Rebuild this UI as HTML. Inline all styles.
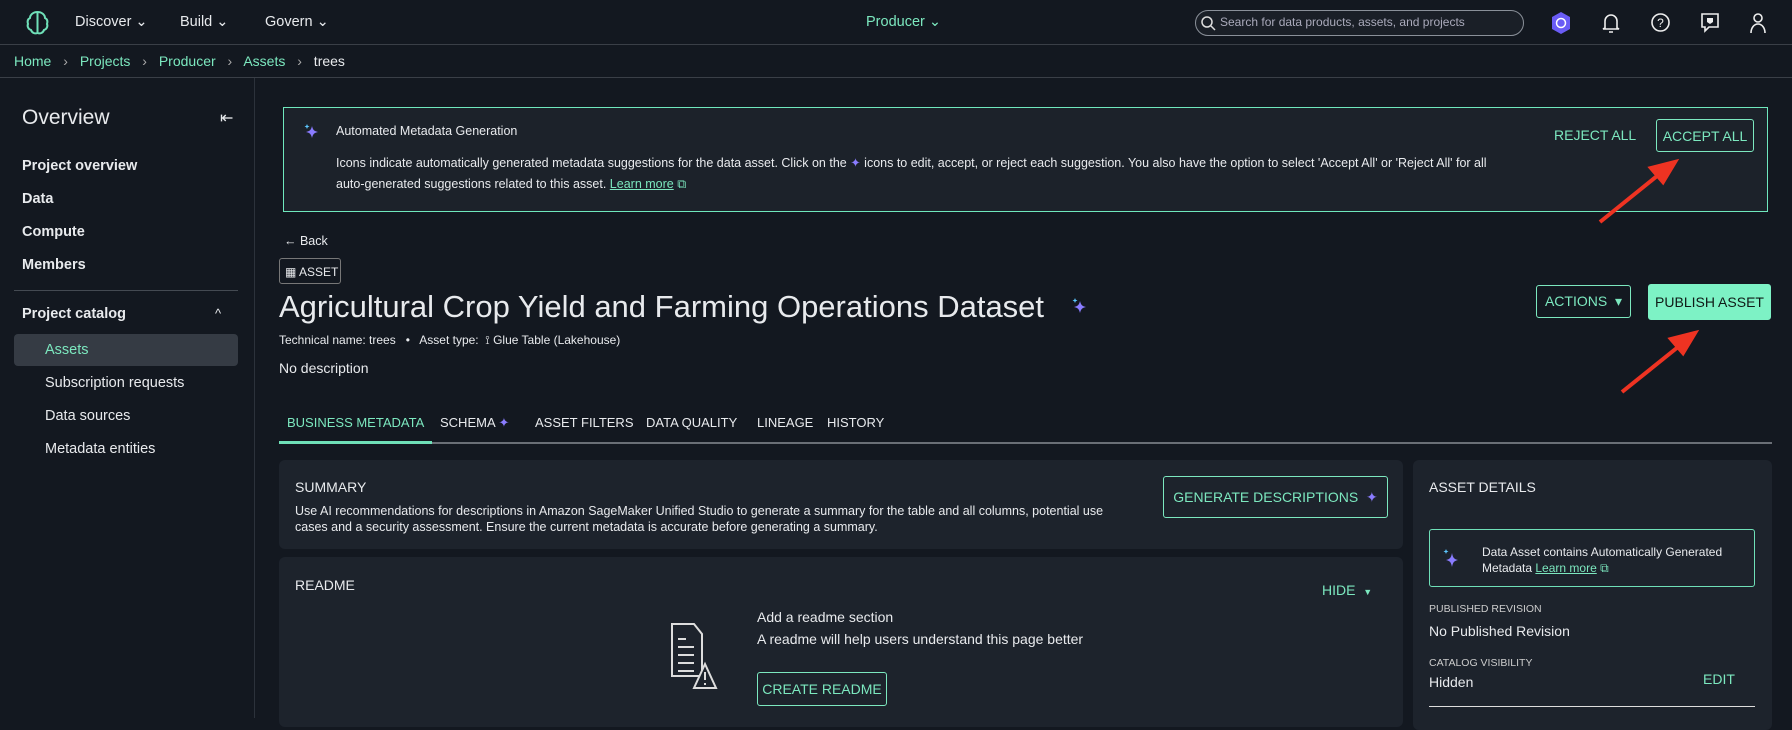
<!DOCTYPE html>
<html><head><meta charset="utf-8"><style>
*{box-sizing:border-box;margin:0;padding:0}
body{width:1792px;height:715px;overflow:hidden;background:#131820;font-family:"Liberation Sans",sans-serif;color:#e8eaed;position:relative}
.a{position:absolute;white-space:nowrap}
.g{color:#7ce8bf}
.btn{position:absolute;border:1px solid #7ce8bf;border-radius:3px;color:#7ce8bf;font-size:13.5px;display:flex;align-items:center;justify-content:center}
.sp{position:absolute}
</style></head><body>
<div class="a" style="left:0;top:0;width:1792px;height:45px;border-bottom:1px solid #3a3f47"></div>
<svg class="sp" style="left:25px;top:10px" width="25" height="26" viewBox="0 0 25 26"><path d="M12.5 2C8 2 5 5 5 8c-2 1-3 3-2 6-1 2 0 5 3 6 1 3 4 4 6.5 3 2.5 1 5.5 0 6.5-3 3-1 4-4 3-6 1-3 0-5-2-6 0-3-3-6-7.5-6z M12.5 2v22" fill="none" stroke="#6fe0b8" stroke-width="2"/></svg>
<div class="a" style="left:75px;top:14px;font-size:14.5px">Discover ⌄</div>
<div class="a" style="left:180px;top:14px;font-size:14.5px">Build ⌄</div>
<div class="a" style="left:265px;top:14px;font-size:14.5px">Govern ⌄</div>
<div class="a g" style="left:866px;top:14px;font-size:14.5px">Producer ⌄</div>
<div class="a" style="left:1195px;top:10px;width:329px;height:26px;border:1px solid #8a9099;border-radius:13px;background:#1a1f27"></div>
<svg class="sp" style="left:1200px;top:15px" width="16" height="16"><circle cx="7" cy="7" r="5" fill="none" stroke="#ddd" stroke-width="1.5"/><path d="M11 11l4 4" stroke="#ddd" stroke-width="1.5"/></svg>
<div class="a" style="left:1220px;top:15px;font-size:12px;color:#aab">Search for data products, assets, and projects</div>
<svg class="sp" style="left:1551px;top:11px" width="20" height="24"><path d="M10 1l9 5v12l-9 5-9-5V6z" fill="#6a5cf5"/><circle cx="10" cy="12" r="4.5" fill="none" stroke="#fff" stroke-width="1.5"/></svg>
<svg class="sp" style="left:1601px;top:12px" width="20" height="22"><path d="M4 16V9a6 6 0 0112 0v7l2 1H2zM8 20h4" fill="none" stroke="#eee" stroke-width="1.6"/></svg>
<svg class="sp" style="left:1650px;top:12px" width="21" height="21"><circle cx="10.5" cy="10.5" r="8.5" fill="none" stroke="#eee" stroke-width="1.6"/><text x="10.5" y="15" font-size="12" text-anchor="middle" fill="#eee" font-family="Liberation Sans">?</text></svg>
<svg class="sp" style="left:1700px;top:12px" width="20" height="21"><path d="M2 2h16v13H9l-4 4v-4H2z" fill="none" stroke="#eee" stroke-width="1.6"/><path d="M7 6h6v4l-3 2-3-2z" fill="#eee"/></svg>
<svg class="sp" style="left:1749px;top:12px" width="18" height="22"><circle cx="9" cy="6" r="4" fill="none" stroke="#eee" stroke-width="1.6"/><path d="M2 21c0-5 3-9 7-9s7 4 7 9" fill="none" stroke="#eee" stroke-width="1.6"/></svg>
<div class="a" style="left:0;top:77px;width:1792px;border-top:1px solid #3a3f47"></div>
<div class="a" style="left:14px;top:53px;font-size:14px"><span class="g">Home</span> <span style="color:#aaa;margin:0 8px">›</span> <span class="g">Projects</span> <span style="color:#aaa;margin:0 8px">›</span> <span class="g">Producer</span> <span style="color:#aaa;margin:0 8px">›</span> <span class="g">Assets</span> <span style="color:#aaa;margin:0 8px">›</span> trees</div>
<div class="a" style="left:254px;top:78px;height:640px;border-left:1px solid #2c323b"></div>
<div class="a" style="left:22px;top:106px;font-size:21px">Overview</div>
<div class="a" style="left:220px;top:108px;font-size:16px">⇤</div>
<div class="a" style="left:22px;top:158px;font-size:14.5px;font-weight:bold">Project overview</div>
<div class="a" style="left:22px;top:191px;font-size:14.5px;font-weight:bold">Data</div>
<div class="a" style="left:22px;top:224px;font-size:14.5px;font-weight:bold">Compute</div>
<div class="a" style="left:22px;top:257px;font-size:14.5px;font-weight:bold">Members</div>
<div class="a" style="left:14px;top:290px;width:224px;border-top:1px solid #444a52"></div>
<div class="a" style="left:22px;top:306px;font-size:14.5px;font-weight:bold">Project catalog</div>
<div class="a" style="left:215px;top:306px;font-size:13px">^</div>
<div class="a" style="left:14px;top:334px;width:224px;height:32px;background:#353b44;border-radius:4px"></div>
<div class="a g" style="left:45px;top:342px;font-size:14.5px">Assets</div>
<div class="a" style="left:45px;top:375px;font-size:14.5px">Subscription requests</div>
<div class="a" style="left:45px;top:408px;font-size:14.5px">Data sources</div>
<div class="a" style="left:45px;top:441px;font-size:14.5px">Metadata entities</div>
<div class="a" style="left:283px;top:107px;width:1485px;height:105px;border:1.5px solid #6fe8bd;background:#1c222a"></div>
<svg class="sp" style="left:303px;top:123px" width="18" height="18"><path d="M9 3c1 4 2 5 6 6-4 1-5 2-6 6-1-4-2-5-6-6 4-1 5-2 6-6z" fill="#8a7cff"/><path d="M4 1l.7 1.8L6.5 3.5 4.7 4.2 4 6 3.3 4.2 1.5 3.5 3.3 2.8z" fill="#5cc8ff"/></svg>
<div class="a" style="left:336px;top:124px;font-size:12.5px">Automated Metadata Generation</div>
<div class="a" style="left:336px;top:155px;font-size:12.5px">Icons indicate automatically generated metadata suggestions for the data asset. Click on the <span style="color:#8a7cff">✦</span> icons to edit, accept, or reject each suggestion. You also have the option to select 'Accept All' or 'Reject All' for all</div>
<div class="a" style="left:336px;top:177px;font-size:12.5px">auto-generated suggestions related to this asset. <span class="g" style="text-decoration:underline">Learn more</span> <span class="g">⧉</span></div>
<div class="a g" style="left:1554px;top:127px;font-size:14px">REJECT ALL</div>
<div class="btn" style="left:1656px;top:119px;width:98px;height:33px;font-size:14px">ACCEPT ALL</div>
<svg class="sp" style="left:0;top:0" width="1792" height="715"><g stroke="#ee3322" stroke-width="4" fill="#ee3322"><path d="M1600 222L1662 172"/><path d="M1675 162l-24 6 12 14z"/><path d="M1622 392L1683 343"/><path d="M1695 333l-24 6 12 14z"/></g></svg>
<div class="a" style="left:284px;top:234px;font-size:12.5px">← Back</div>
<div class="a" style="left:279px;top:258px;width:62px;height:26px;border:1px solid #777;border-radius:3px;font-size:12px;padding:6px 0 0 5px">▦ ASSET</div>
<div class="a" style="left:279px;top:289px;font-size:31px">Agricultural Crop Yield and Farming Operations Dataset</div>
<svg class="sp" style="left:1070px;top:297px" width="20" height="20"><path d="M10 4c1 4 2 5 6 6-4 1-5 2-6 6-1-4-2-5-6-6 4-1 5-2 6-6z" fill="#8a7cff"/><path d="M5 1l.7 1.8 1.8.7-1.8.7L5 6l-.7-1.8-1.8-.7 1.8-.7z" fill="#5cc8ff"/></svg>
<div class="a" style="left:279px;top:333px;font-size:12px">Technical name: trees &nbsp;&nbsp;•&nbsp;&nbsp; Asset type: &nbsp;⟟ Glue Table (Lakehouse)</div>
<div class="a" style="left:279px;top:360px;font-size:14px">No description</div>
<div class="btn" style="left:1536px;top:285px;width:95px;height:33px;font-size:14px">ACTIONS &nbsp;▾</div>
<div class="btn" style="left:1648px;top:284px;width:123px;height:36px;background:#7df2c5;color:#0f1a16;border-color:#7df2c5;font-size:14px">PUBLISH ASSET</div>
<div class="a g" style="left:287px;top:415px;font-size:13px">BUSINESS METADATA</div>
<div class="a" style="left:440px;top:415px;font-size:13px">SCHEMA <span style="color:#8a7cff">✦</span></div>
<div class="a" style="left:535px;top:415px;font-size:13px">ASSET FILTERS</div>
<div class="a" style="left:646px;top:415px;font-size:13px">DATA QUALITY</div>
<div class="a" style="left:757px;top:415px;font-size:13px">LINEAGE</div>
<div class="a" style="left:827px;top:415px;font-size:13px">HISTORY</div>
<div class="a" style="left:279px;top:442px;width:1493px;height:2px;background:#6a6f76"></div>
<div class="a" style="left:279px;top:441px;width:153px;height:3px;background:#6fe0b8"></div>
<div class="a" style="left:279px;top:460px;width:1124px;height:89px;background:#1d232c;border-radius:6px"></div>
<div class="a" style="left:295px;top:479px;font-size:14px">SUMMARY</div>
<div class="a" style="left:295px;top:503px;font-size:12.5px;line-height:16px">Use AI recommendations for descriptions in Amazon SageMaker Unified Studio to generate a summary for the table and all columns, potential use<br>cases and a security assessment. Ensure the current metadata is accurate before generating a summary.</div>
<div class="btn" style="left:1163px;top:476px;width:225px;height:42px;font-size:14px">GENERATE DESCRIPTIONS &nbsp;<span style="color:#8a7cff">✦</span></div>
<div class="a" style="left:279px;top:557px;width:1124px;height:170px;background:#1d232c;border-radius:6px"></div>
<div class="a" style="left:295px;top:577px;font-size:14px">README</div>
<div class="a g" style="left:1322px;top:582px;font-size:14px">HIDE &nbsp;<span style="font-size:9px">▼</span></div>
<svg class="sp" style="left:670px;top:622px" width="60" height="70"><path d="M2 2h22l8 10v42H2z" fill="none" stroke="#ddd" stroke-width="2"/><path d="M8 17h8M8 25h16M8 33h16M8 41h16M8 49h16" stroke="#ddd" stroke-width="2"/><path d="M35 42l-11 24h22z" fill="#1d232c" stroke="#ddd" stroke-width="2"/><path d="M35 50v8M35 61v2" stroke="#ddd" stroke-width="2"/></svg>
<div class="a" style="left:757px;top:609px;font-size:14px">Add a readme section</div>
<div class="a" style="left:757px;top:631px;font-size:14px">A readme will help users understand this page better</div>
<div class="btn" style="left:757px;top:672px;width:130px;height:34px;font-size:14px">CREATE README</div>
<div class="a" style="left:1413px;top:460px;width:359px;height:270px;background:#1d232c;border-radius:6px"></div>
<div class="a" style="left:1429px;top:479px;font-size:14px">ASSET DETAILS</div>
<div class="a" style="left:1429px;top:529px;width:326px;height:58px;border:1px solid #6fe0b8;border-radius:3px"></div>
<svg class="sp" style="left:1442px;top:548px" width="20" height="22"><path d="M10 5c1 5 2 6 6 7-4 1-5 2-6 7-1-5-2-6-6-7 4-1 5-2 6-7z" fill="#8a7cff"/><path d="M4 1l.7 1.8 1.8.7-1.8.7L4 6l-.7-1.8-1.8-.7 1.8-.7z" fill="#5cc8ff"/></svg>
<div class="a" style="left:1482px;top:544px;font-size:12px;line-height:16px">Data Asset contains Automatically Generated<br>Metadata <span class="g" style="text-decoration:underline">Learn more</span> <span class="g">⧉</span></div>
<div class="a" style="left:1429px;top:603px;font-size:10.5px;color:#ccc">PUBLISHED REVISION</div>
<div class="a" style="left:1429px;top:623px;font-size:14px">No Published Revision</div>
<div class="a" style="left:1429px;top:657px;font-size:10.5px;color:#ccc">CATALOG VISIBILITY</div>
<div class="a" style="left:1429px;top:674px;font-size:14px">Hidden</div>
<div class="a g" style="left:1703px;top:671px;font-size:14px">EDIT</div>
<div class="a" style="left:1429px;top:706px;width:326px;border-top:1px solid #ddd"></div>
</body></html>
